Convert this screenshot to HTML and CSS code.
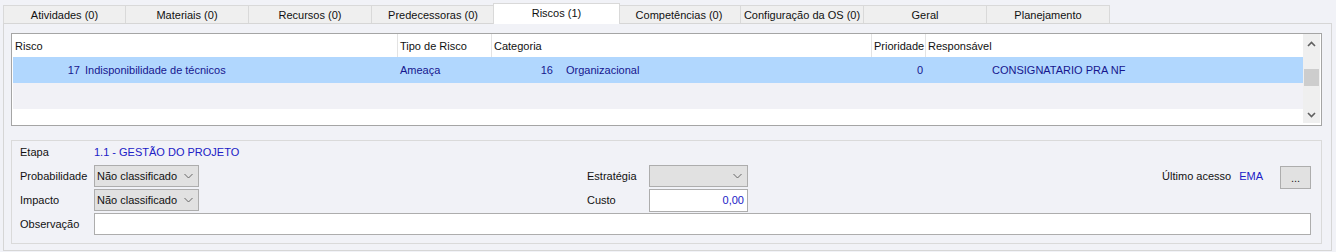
FILE: index.html
```html
<!DOCTYPE html>
<html lang="pt">
<head>
<meta charset="utf-8">
<title>Riscos</title>
<link rel="stylesheet" href="styles.css">
</head>
<body>
<div class="tabs">
  <div class="tab first">Atividades (0)</div>
  <div class="tab">Materiais (0)</div>
  <div class="tab">Recursos (0)</div>
  <div class="tab">Predecessoras (0)</div>
  <div class="tab selected">Riscos (1)</div>
  <div class="tab">Competências (0)</div>
  <div class="tab">Configuração da OS (0)</div>
  <div class="tab">Geral</div>
  <div class="tab">Planejamento</div>
</div>
<div class="panel">
  <div class="grid">
    <div class="grid-body">
      <div class="grid-row header">
        <div class="cell c1">Risco</div>
        <div class="cell c2">Tipo de Risco</div>
        <div class="cell c3">Categoria</div>
        <div class="cell c4">Prioridade</div>
        <div class="cell c5">Responsável</div>
      </div>
      <div class="grid-row data selected-row">
        <div class="cell c1"><span class="num n1">17</span><span class="name">Indisponibilidade de técnicos</span></div>
        <div class="cell c2">Ameaça</div>
        <div class="cell c3"><span class="num n3">16</span><span class="name n3name">Organizacional</span></div>
        <div class="cell c4 right">0</div>
        <div class="cell c5 resp">CONSIGNATARIO PRA NF</div>
      </div>
      <div class="grid-row data alt-row"></div>
    </div>
    <div class="scrollbar">
      <svg class="arrow" width="17" height="17" viewBox="0 0 17 17"><path d="M5 10 L8.5 6.5 L12 10" fill="none" stroke="#606060" stroke-width="1.6"/></svg>
      <div class="track"><div class="thumb"></div></div>
      <svg class="arrow" width="17" height="17" viewBox="0 0 17 17"><path d="M5 7 L8.5 10.5 L12 7" fill="none" stroke="#606060" stroke-width="1.6"/></svg>
    </div>
  </div>

  <div class="groupbox">
    <div class="frow">
      <span class="label">Etapa</span>
      <span class="value">1.1 - GESTÃO DO PROJETO</span>
    </div>
    <div class="frow">
      <span class="label">Probabilidade</span>
      <div class="combo w105"><span>Não classificado</span><svg width="9" height="6" viewBox="0 0 9 6"><path d="M0.5 1 L4.5 5 L8.5 1" fill="none" stroke="#666" stroke-width="1"/></svg></div>
      <span class="label mid">Estratégia</span>
      <div class="combo w99"><span></span><svg width="9" height="6" viewBox="0 0 9 6"><path d="M0.5 1 L4.5 5 L8.5 1" fill="none" stroke="#666" stroke-width="1"/></svg></div>
      <span class="spacer"></span>
      <span class="plain">Último acesso</span>
      <span class="value ema">EMA</span>
      <div class="btn">...</div>
    </div>
    <div class="frow">
      <span class="label">Impacto</span>
      <div class="combo w105"><span>Não classificado</span><svg width="9" height="6" viewBox="0 0 9 6"><path d="M0.5 1 L4.5 5 L8.5 1" fill="none" stroke="#666" stroke-width="1"/></svg></div>
      <span class="label mid">Custo</span>
      <div class="edit w99 num-edit">0,00</div>
    </div>
    <div class="frow">
      <span class="label">Observação</span>
      <div class="edit grow"></div>
    </div>
  </div>
</div>
</body>
</html>
```

FILE: styles.css
```css
* { box-sizing: border-box; }
html, body { margin: 0; padding: 0; }
body {
  background: #f1f2f7;
  font-family: "Liberation Sans", Arial, sans-serif;
  font-size: 11px;
  color: #111;
  width: 1336px;
  height: 252px;
  overflow: hidden;
}

/* Tabs */
.tabs {
  display: flex;
  align-items: flex-end;
  height: 20px;
  margin-top: 3px;
  padding-left: 3px;
}
.tab {
  width: 124px;
  height: 18px;
  margin-left: -1px;
  border: 1px solid #d9d9d9;
  border-bottom: none;
  background: #efefef;
  text-align: center;
  padding-top: 2px;
  line-height: 14px;
  color: #111;
  white-space: nowrap;
}
.tab.first { margin-left: 0; width: 123px; }
.tab.selected {
  width: 127px;
  height: 21px;
  margin-left: -2px;
  margin-right: -2px;
  margin-bottom: -1px;
  background: #ffffff;
  position: relative;
  z-index: 2;
}

/* Panel */
.panel {
  margin-left: 3px;
  width: 1329px;
  height: 228px;
  border: 1px solid #d6d6d6;
  padding: 9px 9px 6px 7px;
  display: flex;
  flex-direction: column;
}

/* Grid */
.grid {
  height: 93px;
  border: 1px solid #a5a5a5;
  background: #fff;
  display: flex;
  padding: 0 1px 2px 1px;
}
.grid-body {
  flex: 1;
  display: flex;
  flex-direction: column;
}
.grid-row {
  display: flex;
  height: 26px;
  align-items: center;
}
.grid-row.header { height: 23px; align-items: stretch; }
.grid-row.header .cell {
  border-right: 1px solid #e3e3e3;
  display: flex;
  align-items: center;
  padding-left: 2px;
  color: #111;
}
.grid-row.header .c5 { border-right: none; }
.cell { white-space: nowrap; overflow: hidden; }
.c1 { width: 385px; }
.c2 { width: 94px; }
.c3 { width: 380px; }
.c4 { width: 54px; }
.c5 { flex: 1; }
.selected-row { background: #b1d7fe; color: #16168e; }
.selected-row .cell { padding-left: 2px; }
.alt-row { background: #f1f1f6; }
.selected-row .c1, .selected-row .c3 { padding-left: 0; display: flex; }
.num { display: inline-block; text-align: right; }
.n1 { width: 67px; margin-right: 5px; }
.n3 { width: 61px; margin-right: 13px; }
.right { text-align: right; padding-right: 3px; }
.selected-row .c4 { padding-left: 0; }
.selected-row .resp { padding-left: 66px; }

.scrollbar {
  width: 17px;
  background: #efefef;
  display: flex;
  flex-direction: column;
  align-items: center;
}
.arrow { display: block; flex: none; margin-top: 2px; }
.scrollbar .arrow:last-child { margin-top: 0; margin-bottom: 0; }
.track { flex: 1; width: 17px; padding-top: 16px; }
.thumb { width: 15px; height: 17px; margin-left: 1px; background: #cdcdcd; }

/* Group box */
.groupbox {
  margin-top: 14px;
  height: 104px;
  border: 1px solid #dadada;
  padding: 0 10px 8px 8px;
  display: flex;
  flex-direction: column;
  gap: 2px;
}
.frow {
  display: flex;
  align-items: center;
  height: 22px;
}
.label { width: 74px; flex: none; color: #111; }
.label.mid { margin-left: 388px; width: 62px; }
.value { color: #2020c6; }
.plain { color: #111; }
.ema { margin-left: 8px; margin-right: 17px; }
.spacer { flex: 1; }
.combo {
  height: 22px;
  border: 1px solid #adadad;
  background: #e1e1e1;
  display: flex;
  align-items: center;
  justify-content: space-between;
  padding: 0 5px 0 2px;
  color: #111;
}
.w105 { width: 105px; }
.w99 { width: 99px; }
.edit {
  height: 22px;
  border: 1px solid #adadad;
  background: #fff;
}
.num-edit {
  height: 23px;
  margin-top: 1px;
  text-align: right;
  padding-right: 3px;
  line-height: 21px;
  color: #2020c6;
}
.grow { flex: 1; }
.btn {
  width: 31px;
  height: 23px;
  margin-top: 2px;
  border: 1px solid #adadad;
  background: #e1e1e1;
  text-align: center;
  line-height: 22px;
  color: #222;
}
```
